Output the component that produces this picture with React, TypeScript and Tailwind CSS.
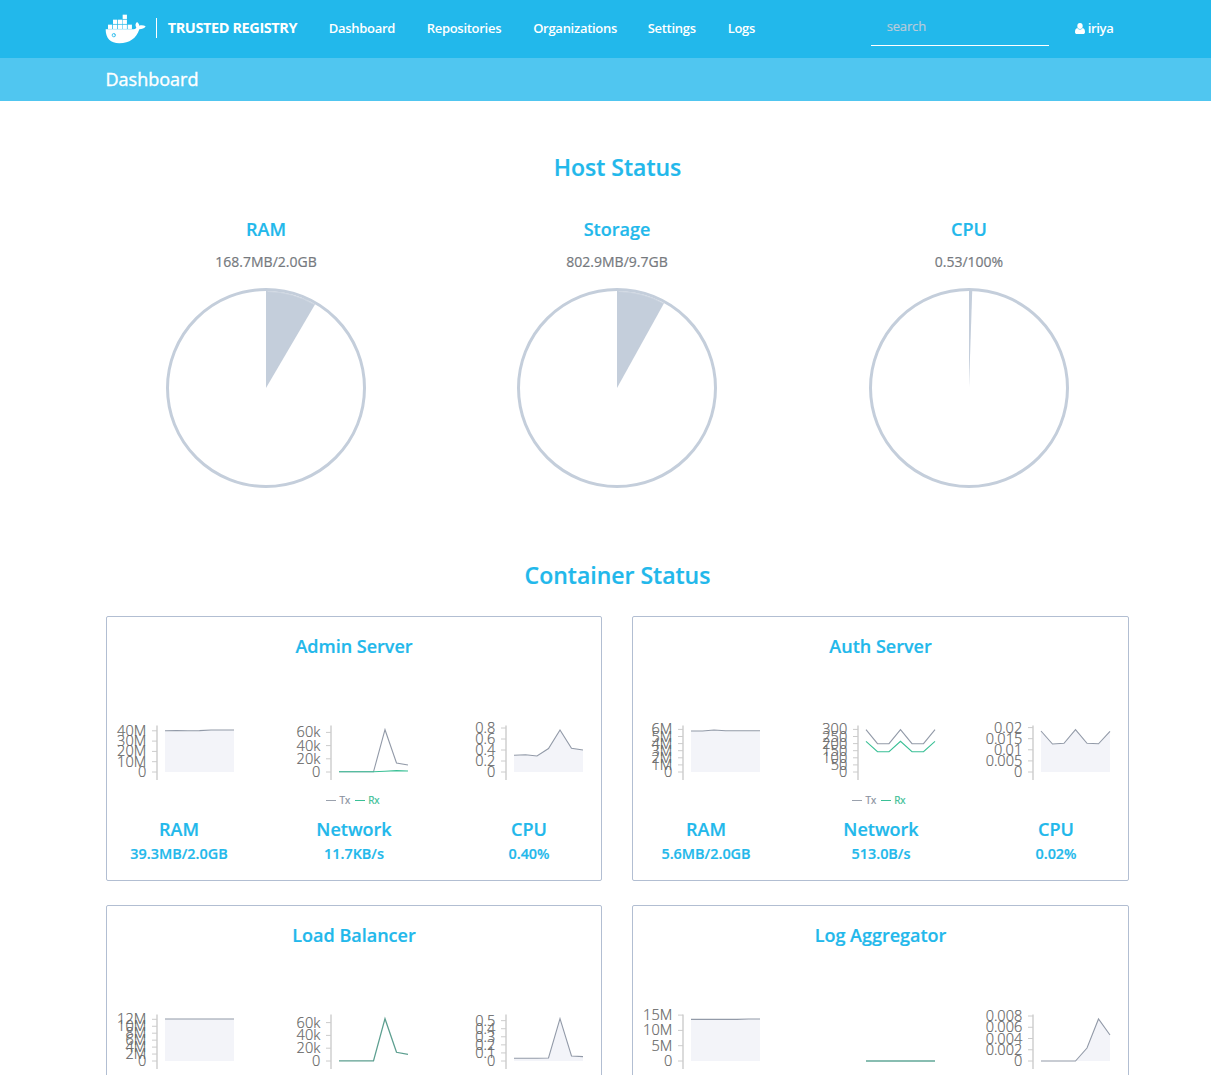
import React from "react";

type Series = { color: string; heights: number[]; area?: boolean; width?: number };

type ChartData = {
  title: string;
  value: string;
  labels: string[];
  step: number;
  series: Series[];
  legend?: boolean;
  shift?: number;
};

type CardData = { title: string; charts: ChartData[] };

const GRAY = "#929aa8";
const GREEN = "#3ac096";
const TEAL = "#5d9f90";
const BASE = 59;

const cards: CardData[] = [
  {
    title: "Admin Server",
    charts: [
      {
        title: "RAM", value: "39.3MB/2.0GB", step: 10.3, labels: ["0", "10M", "20M", "30M", "40M"],
        series: [{ color: GRAY, area: true, heights: [41.3, 41.4, 41.3, 41.4, 42, 42, 42] }],
      },
      {
        title: "Network", value: "11.7KB/s", step: 13.2, labels: ["0", "20k", "40k", "60k"], legend: true, shift: -1,
        series: [
          { color: GRAY, heights: [0.2, 0.2, 0.2, 0.2, 42.3, 9, 7] },
          { color: GREEN, heights: [0.2, 0.2, 0.2, 0.2, 0.8, 1.4, 1] },
        ],
      },
      {
        title: "CPU", value: "0.40%", step: 11, labels: ["0", "0.2", "0.4", "0.6", "0.8"], shift: -1,
        series: [{ color: GRAY, area: true, heights: [16.7, 17.3, 16, 23.5, 42, 23.7, 22] }],
      },
    ],
  },
  {
    title: "Auth Server",
    charts: [
      {
        title: "RAM", value: "5.6MB/2.0GB", step: 7.1, labels: ["0", "1M", "2M", "3M", "4M", "5M", "6M"],
        series: [{ color: GRAY, area: true, heights: [41, 41, 42, 41.3, 41.3, 41.3, 41.3] }],
      },
      {
        title: "Network", value: "513.0B/s", step: 7.1, labels: ["0", "50", "100", "150", "200", "250", "300"], legend: true,
        series: [
          { color: GRAY, heights: [42.3, 28.3, 28.3, 42.3, 28.3, 28.3, 42.3] },
          { color: GREEN, heights: [30.7, 20.3, 20.3, 30.7, 20.3, 20.3, 30.7] },
        ],
      },
      {
        title: "CPU", value: "0.02%", step: 11.1, labels: ["0", "0.005", "0.01", "0.015", "0.02"],
        series: [{ color: GRAY, area: true, heights: [41, 28, 28.7, 42.3, 28.7, 28.2, 40.7] }],
      },
    ],
  },
  {
    title: "Load Balancer",
    charts: [
      {
        title: "RAM", value: "11.9MB/2.0GB", step: 6.95, labels: ["0", "2M", "4M", "6M", "8M", "10M", "12M"],
        series: [{ color: GRAY, area: true, heights: [42, 42, 42, 42, 42, 42, 42] }],
      },
      {
        title: "Network", value: "20.1KB/s", step: 12.8, labels: ["0", "20k", "40k", "60k"], legend: true, shift: -1,
        series: [{ color: TEAL, width: 1.3, heights: [0.2, 0.2, 0.2, 0.2, 42.3, 8.7, 6.7] }],
      },
      {
        title: "CPU", value: "0.05%", step: 8.07, labels: ["0", "0.1", "0.2", "0.3", "0.4", "0.5"], shift: -1,
        series: [{ color: GRAY, area: true, heights: [2.8, 2.8, 2.8, 3, 42.3, 5, 4.4] }],
      },
    ],
  },
  {
    title: "Log Aggregator",
    charts: [
      {
        title: "RAM", value: "13.8MB/2.0GB", step: 15.3, labels: ["0", "5M", "10M", "15M"],
        series: [{ color: GRAY, area: true, heights: [41.6, 41.6, 41.6, 41.6, 41.6, 42, 42] }],
      },
      {
        title: "Network", value: "0.0B/s", step: 0, labels: [], legend: true,
        series: [{ color: "#88bdb1", width: 2, heights: [0, 0, 0, 0, 0, 0, 0] }],
      },
      {
        title: "CPU", value: "0.00%", step: 11.25, labels: ["0", "0.002", "0.004", "0.006", "0.008"],
        series: [{ color: GRAY, area: true, heights: [0, 0, 0, 0, 13, 42, 26] }],
      },
    ],
  },
];

function MiniChart({ chart }: { chart: ChartData }) {
  const point = (h: number, i: number) => `${73 + i * 11.5},${(BASE - h).toFixed(2)}`;
  return (
    <svg width="175" height="80" className="block overflow-visible">
      <g transform={`translate(${chart.shift ?? 0} 0)`}>
        {chart.labels.length > 0 && <path d="M65 12.500V67" stroke="#d2d2d2" strokeWidth="1.6" />}
        {chart.labels.map((label, i) => {
          const y = BASE - i * chart.step;
          return (
            <g key={label}>
              <path d={`M60 ${y}H65`} stroke="#cccccc" strokeWidth="1" />
              <text
                x="54.2"
                y={y + 5}
                textAnchor="end"
                fill="#666"
                stroke="#666"
                strokeWidth="0.2"
                className="text-[14.5px] font-light"
              >
                {label}
              </text>
            </g>
          );
        })}
        {chart.series.map((s, i) => {
          const line = s.heights.map(point).join(" ");
          return (
            <g key={i}>
              {s.area && <polygon points={`73,${BASE} ${line} 142,${BASE}`} fill="#f3f4f9" />}
              <polyline points={line} fill="none" stroke={s.color} strokeWidth={s.width ?? 1.1} />
            </g>
          );
        })}
      </g>
    </svg>
  );
}

function Legend() {
  return (
    <div className="flex items-center justify-center gap-[3px] pr-[3px] text-[10px] leading-[14px] [-webkit-text-stroke:0.2px]">
      <span className="h-px w-[10px] bg-[#9aa1ad]" />
      <span className="text-[#8a919e]">Tx</span>
      <span className="ml-[2px] h-px w-[10px] bg-[#3ac096]" />
      <span className="text-[#3ac096]">Rx</span>
    </div>
  );
}

function StatusCard({ card }: { card: CardData }) {
  return (
    <section className="group h-[265px] rounded-[2px] border border-[#b2bed2] text-center text-[#22b8eb] [-webkit-text-stroke:0.2px]">
      <h3 className="mt-[16px] text-[18px] leading-[26px] font-semibold">{card.title}</h3>
      <div className="-mx-[15px] mt-[54px] grid grid-cols-[175px_175px_175px]">
        {card.charts.map((chart) => (
          <div key={chart.title}>
            <MiniChart chart={chart} />
            <div className="h-[14px]">{chart.legend && <Legend />}</div>
            <h4 className="mt-[9px] text-[18px] leading-[26px] font-semibold group-odd:pr-px group-even:pl-px">
              {chart.title}
            </h4>
            <p className="mt-px text-[14.4px] leading-[22px] font-semibold group-odd:pr-px group-even:pl-px">
              {chart.value}
            </p>
          </div>
        ))}
      </div>
    </section>
  );
}

function HostGauge({ title, value, fraction }: { title: string; value: string; fraction: number }) {
  const a = fraction * Math.PI * 2;
  return (
    <div className="flex flex-col items-center [-webkit-text-stroke:0.2px]">
      <h3 className="text-[18px] leading-[26px] font-semibold text-[#22b8eb]">{title}</h3>
      <p className="mt-[9px] text-[14px] leading-[22px] text-[#75797e]">{value}</p>
      <svg width="200" height="200" className="mt-[15px] block">
        <circle cx="100" cy="100" r="98.5" fill="none" stroke="#c4cedb" strokeWidth="3" />
        <path d={`M100 100V3A97 97 0 0 1 ${100 + 97 * Math.sin(a)} ${100 - 97 * Math.cos(a)}Z`} fill="#c4cedb" />
        <path
          d={`M102 3.500A96.500 96.500 0 0 1 ${100 + 96.5 * Math.sin(a)} ${100 - 96.5 * Math.cos(a)}`}
          fill="none"
          stroke="#d3dae4"
          strokeWidth={fraction > 0.05 ? 0.7 : 0}
        />
      </svg>
    </div>
  );
}

function WhaleLogo() {
  const boxes = [[53, 2], [24, 17], [39, 17], [53, 17], [9, 32], [24, 32], [39, 32], [53, 32], [68, 32]];
  return (
    <svg width="40.67" height="30" viewBox="0 0 122 90" fill="white" className="-mt-px">
      {boxes.map(([x, y]) => (
        <rect key={`${x}-${y}`} x={x} y={y} width="12.8" height="12.8" />
      ))}
      <path d="M2 46H84C88 46 92 44 94 41C90 35 91 28 96 24C100 27 103 31 103 35C109 33 117 34 122 37C118 44 111 46 103 46C94 73 74 88 43 88C17 88 2 74 2 46Z" />
      <circle cx="26.500" cy="63.500" r="5" fill="none" stroke="#22b8eb" strokeWidth="2.5" />
      <circle cx="28" cy="62.500" r="1.500" fill="#22b8eb" />
    </svg>
  );
}

function UserIcon() {
  return (
    <svg width="10" height="11" viewBox="0 0 10 11" fill="white" className="-mt-[2px]">
      <ellipse cx="5" cy="3" rx="2.700" ry="3" />
      <path d="M2.400 4.900C.8 5.200 0 6.900 0 8.900C0 10.200.8 11 2 11H8C9.200 11 10 10.200 10 8.900C10 6.900 9.200 5.200 7.600 4.900C6.200 6.900 3.800 6.900 2.400 4.900Z" />
    </svg>
  );
}

export default function App() {
  return (
    <div className="h-[1075px] w-[1211px] overflow-hidden bg-white font-['Open_Sans',sans-serif]">
      <header className="flex h-[58px] items-center bg-[#22b8eb] pl-[105px] text-[13px] font-semibold text-white">
        <WhaleLogo />
        <div className="-mt-[2px] ml-[10px] h-5 w-px bg-white" />
        <span className="-mt-[3px] ml-[11px] w-[161px] text-[14.5px] font-bold tracking-[-0.4px]">
          TRUSTED REGISTRY
        </span>
        <nav className="flex w-[542px] tracking-[-0.28px]">
          <a className="w-[98px]">Dashboard</a>
          <a className="w-[106.500px]">Repositories</a>
          <a className="w-[114.500px]">Organizations</a>
          <a className="w-[80px]">Settings</a>
          <a>Logs</a>
        </nav>
        <div className="mt-[8px] h-[38px] w-[178px] self-start border-b border-white pt-[9px] pl-4 text-[13px] font-normal tracking-[-0.15px] text-[#b9cbda] [-webkit-text-stroke:0.2px]">
          search
        </div>
        <div className="ml-[26px] flex items-center gap-[3px] tracking-[-0.3px]">
          <UserIcon />
          iriya
        </div>
      </header>
      <div className="flex h-[43px] items-center bg-[#50c6f0] pl-[105.500px] text-[18px] text-white [-webkit-text-stroke:0.4px]">
        Dashboard
      </div>

      <main className="pl-[106px]">
        <h2 className="mt-[49px] w-[1023px] text-center text-[23px] leading-[34px] font-semibold text-[#22b8eb] [-webkit-text-stroke:0.2px]">
          Host Status
        </h2>
        <div className="mt-[32px] -ml-[15px] grid grid-cols-[350px_352px_352px]">
          <HostGauge title="RAM" value="168.7MB/2.0GB" fraction={0.0845} />
          <HostGauge title="Storage" value="802.9MB/9.7GB" fraction={0.0805} />
          <HostGauge title="CPU" value="0.53/100%" fraction={0.0053} />
        </div>
        <h2 className="mt-[70px] w-[1023px] text-center text-[23px] leading-[34px] font-semibold text-[#22b8eb] [-webkit-text-stroke:0.2px]">
          Container Status
        </h2>
        <div className="mt-[24px] grid grid-cols-[496px_497px] gap-x-[30px] gap-y-[24px]">
          {cards.map((card) => (
            <StatusCard key={card.title} card={card} />
          ))}
        </div>
      </main>
    </div>
  );
}
